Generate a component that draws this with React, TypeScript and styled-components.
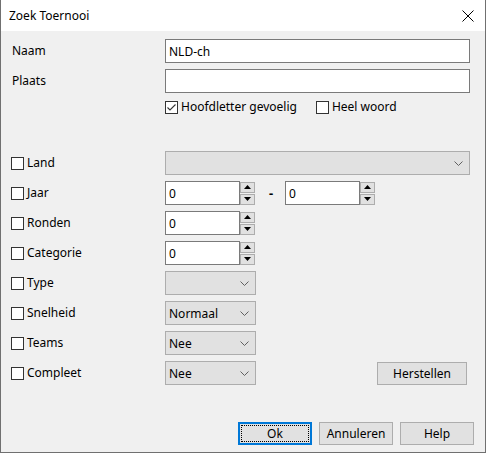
import React from "react";
import styled, { createGlobalStyle } from "styled-components";

const Global = createGlobalStyle`
  html, body { margin: 0; padding: 0; background: #ffffff; }
  body { font-family: "Segoe UI", "Noto Sans", "Liberation Sans", Arial, sans-serif; font-size: 12px; color: #000; }
  * { box-sizing: border-box; }
`;

const Window = styled.div`
  width: 486px;
  height: 453px;
  border: 1px solid #707070;
  border-top: none;
  background: #f0f0f0;
  display: flex;
  flex-direction: column;
`;

const TitleBar = styled.div`
  height: 31px;
  background: #ffffff;
  display: flex;
  align-items: center;
  justify-content: space-between;
  padding: 0 9px 0 8px;
  font-size: 12px;
  flex-shrink: 0;
`;

const CloseBtn = styled.div`
  width: 14px;
  height: 14px;
  display: flex;
  align-items: center;
  justify-content: center;
  margin-right: 1px;
`;

const Body = styled.div`
  flex: 1;
  display: flex;
  flex-direction: column;
  padding: 8px 11px 0 10px;
`;

const Row = styled.div<{ $h: number; $mt?: number }>`
  display: grid;
  grid-template-columns: 154px 1fr;
  align-items: center;
  height: ${(p) => p.$h}px;
  margin-top: ${(p) => p.$mt ?? 0}px;
`;

const Label = styled.span`
  padding-left: 1px;
  line-height: 14px;
`;

const Controls = styled.div<{ $gap?: number; $spread?: boolean }>`
  display: flex;
  align-items: center;
  gap: ${(p) => p.$gap ?? 0}px;
  justify-content: ${(p) => (p.$spread ? "space-between" : "flex-start")};
  height: 100%;
`;

const TextBox = styled.div<{ $w: number }>`
  width: ${(p) => p.$w}px;
  height: 100%;
  background: #ffffff;
  border: 1px solid #7a7a7a;
  display: flex;
  align-items: center;
  padding-left: 3px;
`;

const Combo = styled.div<{ $w: number }>`
  width: ${(p) => p.$w}px;
  height: 24px;
  background: #e1e1e1;
  border: 1px solid #adadad;
  display: flex;
  align-items: center;
  justify-content: space-between;
  padding: 0 6px 0 3px;
`;

const Check = styled.span`
  width: 13px;
  height: 13px;
  border: 1px solid #333333;
  background: #ffffff;
  display: inline-flex;
  align-items: center;
  justify-content: center;
  flex-shrink: 0;
`;

const CheckLabel = styled.label<{ $ml?: number }>`
  display: inline-flex;
  align-items: center;
  gap: 3px;
  margin-left: ${(p) => p.$ml ?? 0}px;
  line-height: 14px;
`;

const Spin = styled.div`
  display: flex;
  flex-direction: column;
  justify-content: center;
  gap: 1px;
  height: 100%;
`;

const SpinBtn = styled.div`
  width: 15px;
  height: 11px;
  background: #e1e1e1;
  border: 1px solid #adadad;
  display: flex;
  align-items: center;
  justify-content: center;
`;

const Dash = styled.span`
  width: 30px;
  text-align: center;
  font-weight: bold;
  font-size: 13px;
  padding-left: 2px;
`;

const Button = styled.div<{ $default?: boolean; $w?: number; $mr?: number }>`
  width: ${(p) => p.$w ?? 74}px;
  height: 23px;
  margin-right: ${(p) => p.$mr ?? 0}px;
  background: #e1e1e1;
  border: ${(p) => (p.$default ? "2px solid #0078d7" : "1px solid #adadad")};
  display: flex;
  align-items: center;
  justify-content: center;
  position: relative;
`;

const FocusRing = styled.span`
  position: absolute;
  inset: 1px;
  border: 1px dotted #000;
`;

const ButtonBar = styled.div`
  display: flex;
  justify-content: flex-end;
  gap: 7px;
  margin-top: 37px;
`;

const Chevron = () => (
  <svg width="9" height="5" viewBox="0 0 9 5">
    <polyline points="0.5,0.5 4.5,4.5 8.5,0.5" fill="none" stroke="#606060" strokeWidth="1" />
  </svg>
);

const Arrow = ({ up }: { up?: boolean }) => (
  <svg width="7" height="4" viewBox="0 0 7 4">
    {up ? <polygon points="3.5,0 7,4 0,4" fill="#000" /> : <polygon points="0,0 7,0 3.5,4" fill="#000" />}
  </svg>
);

const Spinner = () => (
  <Spin>
    <SpinBtn>
      <Arrow up />
    </SpinBtn>
    <SpinBtn>
      <Arrow />
    </SpinBtn>
  </Spin>
);

const Box = ({ checked }: { checked?: boolean }) => (
  <Check>
    {checked && (
      <svg width="11" height="11" viewBox="0 0 11 11">
        <polyline points="1.5,5.5 4,8 9.5,2.5" fill="none" stroke="#333" strokeWidth="1.1" />
      </svg>
    )}
  </Check>
);

const CheckRowLabel = ({ text }: { text: string }) => (
  <CheckLabel>
    <Box />
    <span>{text}</span>
  </CheckLabel>
);

export default function App() {
  return (
    <>
      <Global />
      <Window>
        <TitleBar>
          <span>Zoek Toernooi</span>
          <CloseBtn>
            <svg width="12" height="12" viewBox="0 0 12 12">
              <path d="M0.5 0.5 L11.5 11.5 M11.5 0.5 L0.5 11.5" stroke="#000" strokeWidth="1" />
            </svg>
          </CloseBtn>
        </TitleBar>
        <Body>
          <Row $h={24}>
            <Label>Naam</Label>
            <Controls>
              <TextBox $w={305}>NLD-ch</TextBox>
            </Controls>
          </Row>
          <Row $h={24} $mt={6}>
            <Label>Plaats</Label>
            <Controls>
              <TextBox $w={305} />
            </Controls>
          </Row>
          <Row $h={18} $mt={5}>
            <span />
            <Controls>
              <CheckLabel>
                <Box checked />
                <span>Hoofdletter gevoelig</span>
              </CheckLabel>
              <CheckLabel $ml={19}>
                <Box />
                <span>Heel woord</span>
              </CheckLabel>
            </Controls>
          </Row>
          <Row $h={24} $mt={35}>
            <CheckRowLabel text="Land" />
            <Controls>
              <Combo $w={305}>
                <span />
                <Chevron />
              </Combo>
            </Controls>
          </Row>
          <Row $h={24} $mt={6}>
            <CheckRowLabel text="Jaar" />
            <Controls>
              <TextBox $w={75}>0</TextBox>
              <Spinner />
              <Dash>-</Dash>
              <TextBox $w={75}>0</TextBox>
              <Spinner />
            </Controls>
          </Row>
          <Row $h={24} $mt={6}>
            <CheckRowLabel text="Ronden" />
            <Controls>
              <TextBox $w={75}>0</TextBox>
              <Spinner />
            </Controls>
          </Row>
          <Row $h={24} $mt={6}>
            <CheckRowLabel text="Categorie" />
            <Controls>
              <TextBox $w={75}>0</TextBox>
              <Spinner />
            </Controls>
          </Row>
          <Row $h={24} $mt={6}>
            <CheckRowLabel text="Type" />
            <Controls>
              <Combo $w={91}>
                <span />
                <Chevron />
              </Combo>
            </Controls>
          </Row>
          <Row $h={24} $mt={6}>
            <CheckRowLabel text="Snelheid" />
            <Controls>
              <Combo $w={91}>
                <span>Normaal</span>
                <Chevron />
              </Combo>
            </Controls>
          </Row>
          <Row $h={24} $mt={6}>
            <CheckRowLabel text="Teams" />
            <Controls>
              <Combo $w={91}>
                <span>Nee</span>
                <Chevron />
              </Combo>
            </Controls>
          </Row>
          <Row $h={24} $mt={6}>
            <CheckRowLabel text="Compleet" />
            <Controls $spread>
              <Combo $w={91}>
                <span>Nee</span>
                <Chevron />
              </Combo>
              <Button $w={90} $mr={7}>Herstellen</Button>
            </Controls>
          </Row>
          <ButtonBar>
            <Button $default>
              <FocusRing />
              Ok
            </Button>
            <Button>Annuleren</Button>
            <Button>Help</Button>
          </ButtonBar>
        </Body>
      </Window>
    </>
  );
}
